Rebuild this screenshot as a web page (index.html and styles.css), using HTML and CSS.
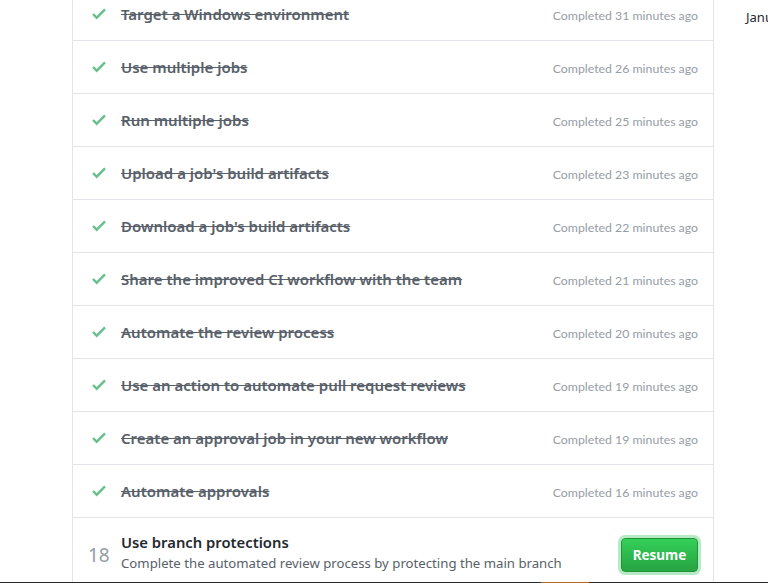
FILE: index.html
```html
<!DOCTYPE html>
<html>
<head>
<meta charset="utf-8">
<link rel="stylesheet" href="styles.css">
</head>
<body>
<div class="page">
  <div class="steps">
    <div class="step done"><svg class="check" viewBox="0 3 12 10.5" width="14" height="12"><path d="M12 5l-8 8-4-4 1.5-1.5L4 10l6.5-6.5L12 5z"/></svg><span class="title">Target a Windows environment</span><span class="when">Completed 31 minutes ago</span></div>
    <div class="step done"><svg class="check" viewBox="0 3 12 10.5" width="14" height="12"><path d="M12 5l-8 8-4-4 1.5-1.5L4 10l6.5-6.5L12 5z"/></svg><span class="title">Use multiple jobs</span><span class="when">Completed 26 minutes ago</span></div>
    <div class="step done"><svg class="check" viewBox="0 3 12 10.5" width="14" height="12"><path d="M12 5l-8 8-4-4 1.5-1.5L4 10l6.5-6.5L12 5z"/></svg><span class="title">Run multiple jobs</span><span class="when">Completed 25 minutes ago</span></div>
    <div class="step done"><svg class="check" viewBox="0 3 12 10.5" width="14" height="12"><path d="M12 5l-8 8-4-4 1.5-1.5L4 10l6.5-6.5L12 5z"/></svg><span class="title">Upload a job's build artifacts</span><span class="when">Completed 23 minutes ago</span></div>
    <div class="step done"><svg class="check" viewBox="0 3 12 10.5" width="14" height="12"><path d="M12 5l-8 8-4-4 1.5-1.5L4 10l6.5-6.5L12 5z"/></svg><span class="title">Download a job's build artifacts</span><span class="when">Completed 22 minutes ago</span></div>
    <div class="step done"><svg class="check" viewBox="0 3 12 10.5" width="14" height="12"><path d="M12 5l-8 8-4-4 1.5-1.5L4 10l6.5-6.5L12 5z"/></svg><span class="title">Share the improved CI workflow with the team</span><span class="when">Completed 21 minutes ago</span></div>
    <div class="step done"><svg class="check" viewBox="0 3 12 10.5" width="14" height="12"><path d="M12 5l-8 8-4-4 1.5-1.5L4 10l6.5-6.5L12 5z"/></svg><span class="title">Automate the review process</span><span class="when">Completed 20 minutes ago</span></div>
    <div class="step done"><svg class="check" viewBox="0 3 12 10.5" width="14" height="12"><path d="M12 5l-8 8-4-4 1.5-1.5L4 10l6.5-6.5L12 5z"/></svg><span class="title">Use an action to automate pull request reviews</span><span class="when">Completed 19 minutes ago</span></div>
    <div class="step done"><svg class="check" viewBox="0 3 12 10.5" width="14" height="12"><path d="M12 5l-8 8-4-4 1.5-1.5L4 10l6.5-6.5L12 5z"/></svg><span class="title">Create an approval job in your new workflow</span><span class="when">Completed 19 minutes ago</span></div>
    <div class="step done"><svg class="check" viewBox="0 3 12 10.5" width="14" height="12"><path d="M12 5l-8 8-4-4 1.5-1.5L4 10l6.5-6.5L12 5z"/></svg><span class="title">Automate approvals</span><span class="when">Completed 16 minutes ago</span></div>
    <div class="step current">
      <span class="num">18</span>
      <div class="info">
        <div class="cur-title">Use branch protections</div>
        <div class="desc">Complete the automated review process by protecting the main branch</div>
      </div>
      <button class="resume">Resume</button>
    </div>
  </div>
  <aside class="side">Janu</aside>
</div>
<div class="taskbar"><span class="tb-active"></span></div>
</body>
</html>
```
FILE: styles.css
```css
* { box-sizing: border-box; }
html, body { margin: 0; padding: 0; background: #fff; }
body { font-family: "Segoe UI", "Noto Sans", sans-serif; color: #24292e; overflow: hidden; }
.page {
  display: flex;
  align-items: flex-start;
  margin-top: -13px;
  padding-left: 72px;
  gap: 32px;
}
.steps {
  width: 642px;
  flex: none;
  border-left: 1px solid #e1e4e8;
  border-right: 1px solid #e1e4e8;
  border-top: 1px solid #e1e4e8;
}
.step {
  display: flex;
  align-items: center;
  height: 53px;
  border-bottom: 1px solid #e1e4e8;
  padding: 0 15px 0 19px;
}
.check { fill: #66c08b; flex: none; margin-right: 15px; }
.title {
  flex: 1;
  font-size: 15px;
  font-weight: 600;
  color: #586069;
  text-decoration: line-through;
}
.when { font-family: Lato, "Noto Sans", sans-serif; font-size: 12.3px; color: #959da5; margin-top: 2px; }
.step.current {
  height: 80px;
  align-items: flex-start;
  padding-top: 13px;
  padding-left: 15px;
  border-bottom: none;
}
.num { font-size: 19px; color: #959da5; width: 33px; margin-top: 11px; }
.info { flex: 1; }
.cur-title { font-size: 14.8px; font-weight: 600; color: #24292e; line-height: 22px; }
.desc { font-size: 13.2px; color: #586069; line-height: 21px; }
.resume {
  margin-top: 7px;
  font-family: inherit;
  font-size: 13.5px;
  font-weight: 700;
  color: #fff;
  height: 34px;
  width: 77px;
  border: 1px solid #22933a;
  border-radius: 4px;
  background: linear-gradient(#34d058, #28a745 90%);
  box-shadow: 0 0 0 3px #b6eac4;
  padding: 0;
}
.side { font-size: 13px; color: #24292e; padding-top: 21px; white-space: nowrap; }
.taskbar {
  position: fixed;
  left: 0; right: 0; bottom: 0;
  height: 1px;
  background: #2b2b2b;
}
.tb-active {
  position: absolute;
  left: 541px; width: 48px; top: 0; height: 1px;
  background: #b5651d;
}
```
